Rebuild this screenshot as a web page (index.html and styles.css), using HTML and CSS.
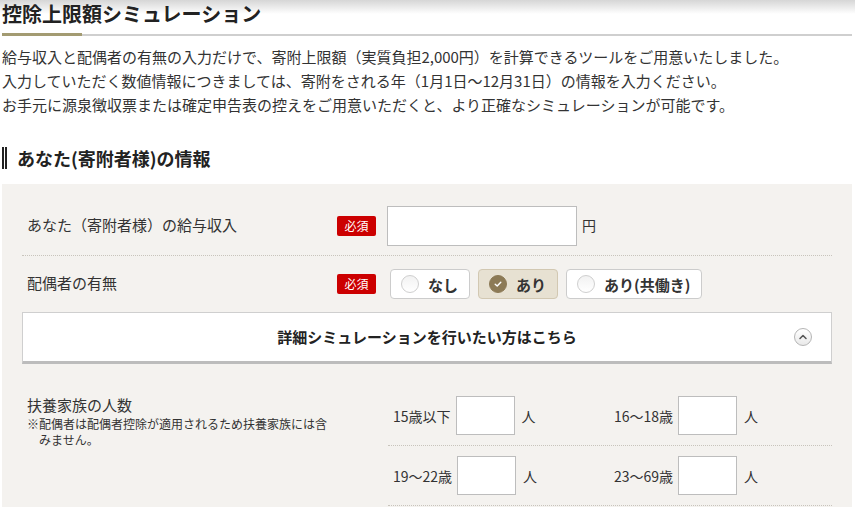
FILE: index.html
```html
<!DOCTYPE html>
<html lang="ja">
<head>
    <meta charset="UTF-8">
    <meta name="viewport" content="width=device-width, initial-scale=1.0">
    <title>控除上限額シミュレーション</title>
    <link rel="stylesheet" href="styles.css">
</head>
<body>
    <div class="page">
        <h1 class="page-title">控除上限額シミュレーション</h1>
        <div class="title-rule">
            <span class="rule-accent"></span>
            <span class="rule-line"></span>
        </div>

        <p class="lead">
            給与収入と配偶者の有無の入力だけで、寄附上限額（実質負担2,000円）を計算できるツールをご用意いたしました。<br>
            入力していただく数値情報につきましては、寄附をされる年（1月1日～12月31日）の情報を入力ください。<br>
            お手元に源泉徴収票または確定申告表の控えをご用意いただくと、より正確なシミュレーションが可能です。
        </p>

        <h2 class="section-title">あなた(寄附者様)の情報</h2>

        <div class="form-panel">
            <!-- 給与収入 -->
            <div class="form-row row-income">
                <div class="row-label">あなた（寄附者様）の給与収入</div>
                <span class="badge">必須</span>
                <input class="text-input income-input" type="text">
                <span class="unit">円</span>
            </div>

            <!-- 配偶者 -->
            <div class="form-row row-spouse">
                <div class="row-label">配偶者の有無</div>
                <span class="badge">必須</span>
                <div class="choice-group">
                    <label class="choice"><span class="choice-mark"></span>なし</label>
                    <label class="choice is-checked">
                        <span class="choice-mark">
                            <svg width="10" height="10" viewBox="0 0 10 10"><path d="M2.2 5.2 L4.2 7 L7.8 3.2" fill="none" stroke="#fff" stroke-width="1.4" stroke-linecap="round" stroke-linejoin="round"/></svg>
                        </span>あり
                    </label>
                    <label class="choice wide"><span class="choice-mark"></span>あり(共働き)</label>
                </div>
            </div>

            <div class="detail-toggle">
                <span class="toggle-text">詳細シミュレーションを行いたい方はこちら</span>
                <span class="toggle-icon">
                    <svg width="10" height="10" viewBox="0 0 10 10"><path d="M2 6.5 L5 3.5 L8 6.5" fill="none" stroke="#555" stroke-width="1.5" stroke-linecap="round" stroke-linejoin="round"/></svg>
                </span>
            </div>

            <!-- 扶養家族 -->
            <div class="form-row row-family">
                <div class="family-label">
                    <div class="family-title">扶養家族の人数</div>
                    <p class="note">※配偶者は配偶者控除が適用されるため扶養家族には含みません。</p>
                </div>
                <div class="age-grid">
                    <div class="age-line">
                        <div class="age-cell"><span>15歳以下</span><input class="text-input small-input" type="text"><span>人</span></div>
                        <div class="age-cell"><span>16～18歳</span><input class="text-input small-input" type="text"><span>人</span></div>
                    </div>
                    <div class="age-line">
                        <div class="age-cell"><span>19～22歳</span><input class="text-input small-input" type="text"><span>人</span></div>
                        <div class="age-cell"><span>23～69歳</span><input class="text-input small-input" type="text"><span>人</span></div>
                    </div>
                </div>
            </div>
        </div>
    </div>
</body>
</html>
```

FILE: styles.css
```css
body {
    margin: 0;
    font-family: "Noto Sans CJK JP", "Noto Sans", sans-serif;
    color: #333;
    background: linear-gradient(to bottom, #d6d6d6 0, #ffffff 14px) no-repeat, #fff;
}

.page {
    width: 850px;
    padding-left: 2px;
}

.page-title {
    margin: 0;
    font-size: 20px;
    line-height: 28px;
    font-weight: bold;
    color: #222;
}

.title-rule {
    display: flex;
    align-items: flex-end;
    margin-top: 5px;
}

.rule-accent {
    width: 80px;
    height: 3px;
    background: #a39b72;
}

.rule-line {
    flex: 1;
    height: 2px;
    background: #cfcfcf;
}

.lead {
    margin: 9px 0 0;
    font-size: 15px;
    line-height: 24px;
}

.section-title {
    margin: 30px 0 0;
    padding-left: 10px;
    border-left: 5px double #222;
    font-size: 18px;
    line-height: 22px;
    font-weight: bold;
    color: #222;
}

.form-panel {
    margin-top: 15px;
    padding: 22px 20px 20px;
    background: #f4f2ef;
}

.form-row {
    display: flex;
    align-items: center;
}

.row-label {
    width: 310px;
    padding-left: 5px;
    font-size: 15px;
    line-height: 20px;
    margin-top: -2px;
}

.badge {
    width: 39px;
    height: 20px;
    line-height: 20px;
    text-align: center;
    font-size: 12px;
    color: #fff;
    background: #c00;
    border-radius: 2px;
}

.text-input {
    box-sizing: border-box;
    border: 1px solid #bdbdbd;
    background: #fff;
    margin: 0;
    padding: 0 6px;
    font-family: inherit;
}

.row-income {
    padding-bottom: 9px;
    border-bottom: 1px dotted #c8c4bc;
}

.income-input {
    width: 190px;
    height: 40px;
    margin-left: 11px;
}

.unit {
    margin-left: 5px;
    font-size: 14px;
    margin-top: -2px;
}

.row-spouse {
    padding: 13px 0;
}

.choice-group {
    display: flex;
    gap: 8px;
    margin-left: 14px;
}

.choice {
    box-sizing: border-box;
    display: flex;
    align-items: center;
    gap: 9px;
    width: 80px;
    height: 30px;
    padding-left: 10px;
    border: 1px solid #cccccc;
    border-radius: 4px;
    background: #fff;
    font-size: 15px;
    font-weight: bold;
    color: #333;
    white-space: nowrap;
}

.choice.wide {
    width: 136px;
}

.choice-mark {
    box-sizing: border-box;
    flex: none;
    display: flex;
    align-items: center;
    justify-content: center;
    width: 18px;
    height: 18px;
    border: 1px solid #cfcfcf;
    border-radius: 50%;
    background: linear-gradient(#f2f2f2, #fff);
}

.choice.is-checked {
    background: #e7e1d2;
    border-color: #d2c8b2;
}

.choice.is-checked .choice-mark {
    border-color: #8c7a56;
    background: #8c7a56;
}

.detail-toggle {
    box-sizing: border-box;
    display: grid;
    grid-template-columns: 1fr auto 1fr;
    align-items: center;
    height: 52px;
    padding-right: 19px;
    background: #fff;
    border: 1px solid #cfcfcf;
    border-bottom: 3px solid #bcbcbc;
}

.toggle-text {
    grid-column: 2;
    font-size: 15px;
    font-weight: bold;
    color: #222;
    padding-left: 19px;
    margin-top: -2px;
}

.toggle-icon {
    grid-column: 3;
    justify-self: end;
    box-sizing: border-box;
    display: flex;
    align-items: center;
    justify-content: center;
    width: 18px;
    height: 18px;
    border: 1px solid #b5b5b5;
    border-radius: 50%;
    background: linear-gradient(#ffffff, #e9e9e9);
}

.row-family {
    align-items: flex-start;
    padding-top: 31px;
}

.family-label {
    width: 361px;
    padding-left: 5px;
}

.family-title {
    font-size: 15px;
    line-height: 20px;
}

.note {
    width: 293px;
    margin: 1px 0 0;
    padding-left: 12px;
    text-indent: -12px;
    font-size: 12px;
    line-height: 16px;
}

.age-grid {
    flex: 1;
    margin-top: 1px;
}

.age-line {
    display: grid;
    grid-template-columns: 221px 1fr;
    padding: 10px 0 10px 5px;
    border-bottom: 1px dotted #c8c4bc;
    font-size: 14px;
}

.age-line:first-child {
    padding-top: 0;
}

.age-cell {
    display: flex;
    align-items: center;
    gap: 5px;
}

.small-input {
    width: 59px;
    height: 39px;
    margin-right: 2px;
}
```
